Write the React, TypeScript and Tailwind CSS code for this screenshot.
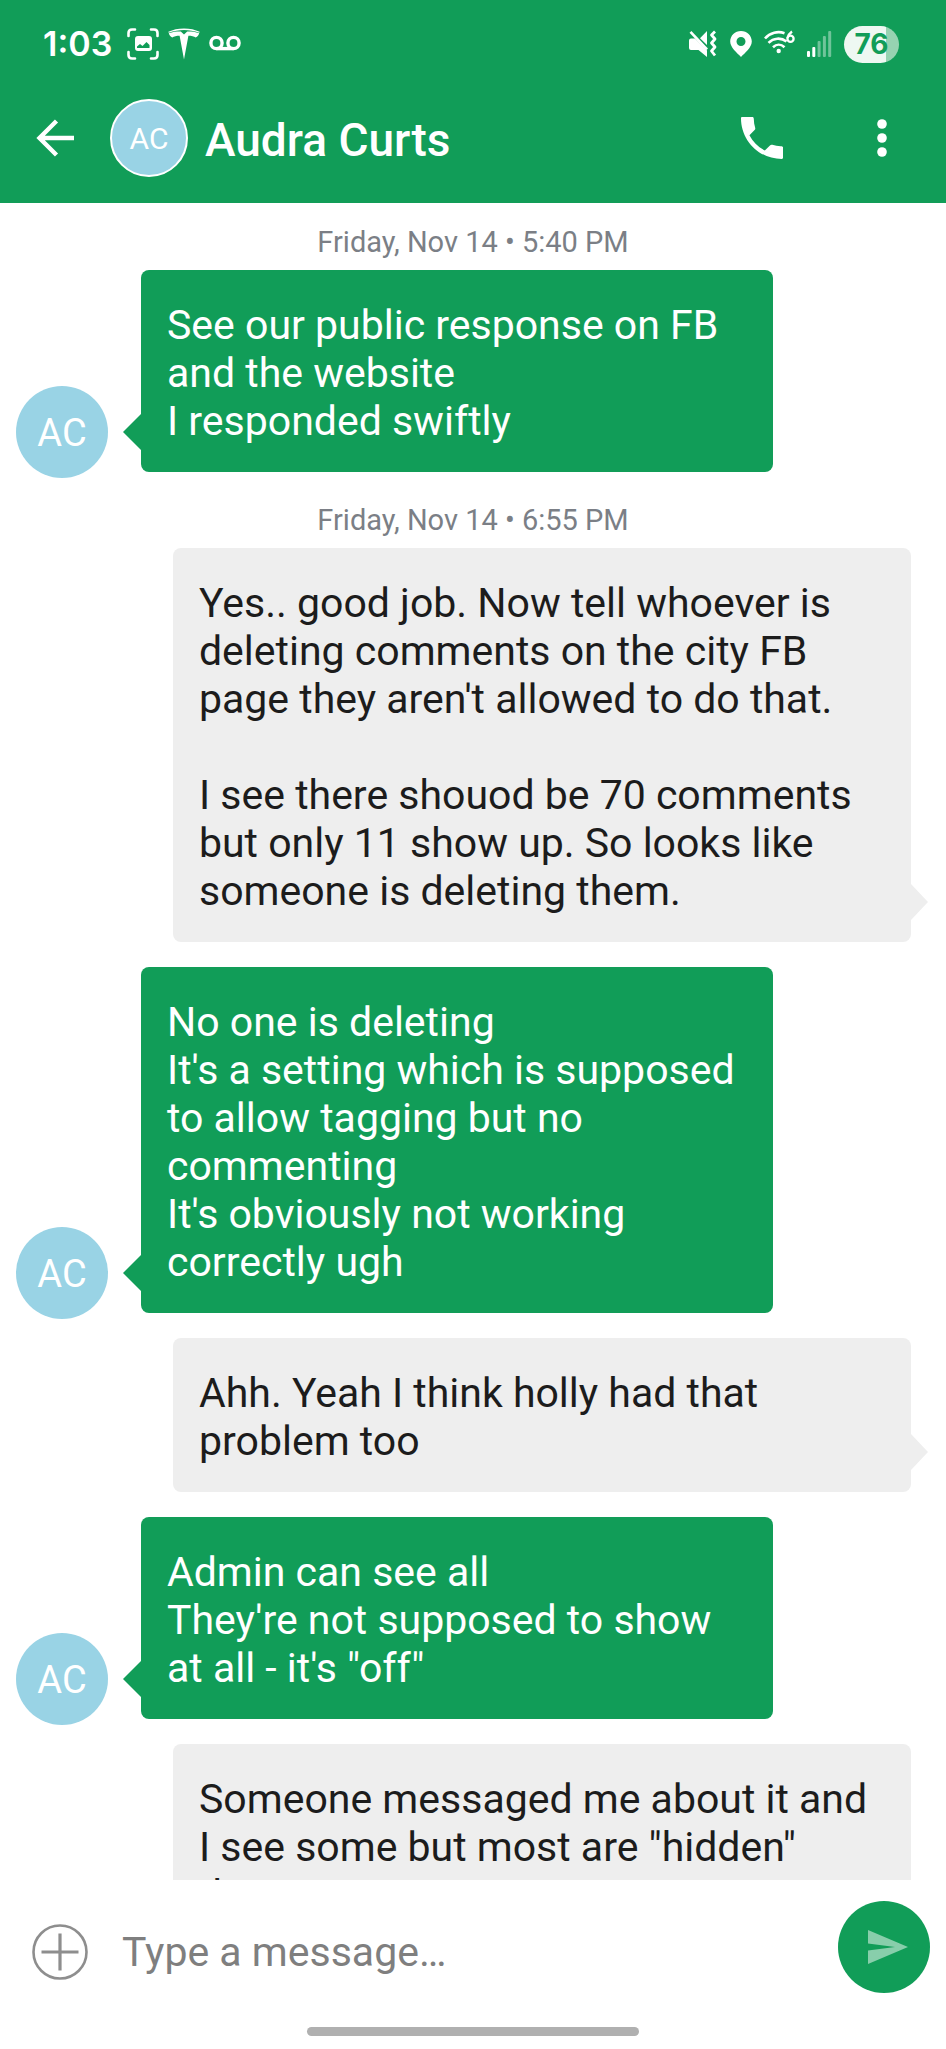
import React, { useState } from 'react';

interface Message {
  id: number;
  mine: boolean;
  text: string;
  date?: string;
}

const messages: Message[] = [
  {
    id: 1,
    mine: false,
    date: 'Friday, Nov 14 • 5:40 PM',
    text: 'See our public response on FB and the website\nI responded swiftly'
  },
  {
    id: 2,
    mine: true,
    date: 'Friday, Nov 14 • 6:55 PM',
    text: "Yes.. good job. Now tell whoever is deleting comments on the city FB page they aren't allowed to do that.\n\nI see there shouod be 70 comments but only 11 show up. So looks like someone is deleting them."
  },
  {
    id: 3,
    mine: false,
    text: "No one is deleting\nIt's a setting which is supposed to allow tagging but no commenting\nIt's obviously not working correctly ugh"
  },
  { id: 4, mine: true, text: 'Ahh. Yeah I think holly had that problem too' },
  {
    id: 5,
    mine: false,
    text: 'Admin can see all\nThey\'re not supposed to show at all - it\'s "off"'
  },
  {
    id: 6,
    mine: true,
    text: 'Someone messaged me about it and I see some but most are "hidden"\nthen'
  }
];

const StatusBar: React.FC = () => (
  <div className="flex h-[88px] items-center justify-between pl-[43px] pr-[47px]">
    <div className="flex items-center gap-[9px]">
      <span className="mr-[6px] font-[Inter,sans-serif] text-[34px] leading-[40px] font-semibold">1:03</span>
      {/* Screen capture */}
      <svg width="32" height="32" viewBox="0 0 32 32" fill="none" stroke="currentColor" strokeWidth="2.6" strokeLinecap="round">
        <path d="M1.5 8V5Q1.5 1.5 5 1.5H8M24 1.5h3q3.500 0 3.500 3.500v3M30.500 24v3q0 3.500-3.500 3.500h-3M8 30.500H5Q1.500 30.500 1.500 27v-3" />
        <path fillRule="evenodd" stroke="none" fill="currentColor" d="M11 8h11a3 3 0 0 1 3 3v9a3 3 0 0 1-3 3H11a3 3 0 0 1-3-3v-9a3 3 0 0 1 3-3zM10 20h12.500v-3l-3-3-4 4-2.500-2-3 2.500z" />
      </svg>
      {/* Tesla */}
      <svg width="32" height="32" viewBox="0 0 32 32" fill="currentColor">
        <path d="M16 31.500 11.600 7.800C8.500 7.800 6 8.300 4.300 9.400 2.500 8.600 1.200 7 .8 5.200 5 3.700 9 3.400 12.800 3.500L16 6.500l3.200-3c3.800-.1 7.800.2 12 1.700-.4 1.800-1.700 3.400-3.500 4.200-1.700-1.100-4.200-1.600-7.300-1.600z" />
        <path d="M.3 3.800C5 1.600 10 .4 16 .4s11 1.200 15.700 3.400l-.4 1C26 2.700 21 1.900 16 1.900S6 2.700.7 4.800z" />
      </svg>
      {/* Voicemail */}
      <svg width="32" height="32" viewBox="0 0 32 32" fill="none" stroke="currentColor" strokeWidth="3.4">
        <circle cx="7.500" cy="15" r="5.600" />
        <circle cx="24.500" cy="15" r="5.600" />
        <path d="M7.500 20.600h17" />
      </svg>
    </div>

    <div className="flex items-center gap-3">
      {/* Muted, vibrate */}
      <svg width="29" height="28" viewBox="0 0 29 28" fill="currentColor">
        <path d="M0 10.500Q0 8.500 2 8.500H6L18 20.500V27l-8.500-7H2Q0 20 0 18zM11 8.200 18 1v14z" />
        <path d="M1.500 1.800 18 19.500" fill="none" stroke="currentColor" strokeWidth="2.600" />
        <path d="m26 1.500-3.500 3.500 3.500 4-3.500 4 3.500 4-3.500 4 3.500 4.500" fill="none" stroke="currentColor" strokeWidth="2.800" strokeLinejoin="round" />
      </svg>
      {/* Location */}
      <svg width="22" height="28" viewBox="0 0 22 28" fill="currentColor">
        <path fillRule="evenodd" d="M11 1c6 0 10.800 4.600 10.800 10.600C21.800 17.500 15 23 11 27 7 23 .2 17.500.2 11.600.2 5.600 5 1 11 1zm0 6a4.500 4.500 0 1 0 0 9 4.500 4.500 0 0 0 0-9z" />
      </svg>
      {/* Wifi 6 */}
      <svg width="31" height="28" viewBox="0 0 31 28" fill="none" stroke="currentColor" strokeWidth="2.600">
        <path d="M1 8.500C6 2.500 14 .8 20.500 3.200M4.500 12.800c5-5 12.500-5.500 18-1.300M9 17.200c3.500-3.300 8-3.300 11.500 0" />
        <circle cx="14.700" cy="21" r="2.200" fill="currentColor" stroke="none" />
        <circle cx="26.500" cy="8.800" r="3.100" strokeWidth="2.300" />
        <path d="M23.500 8Q24.500 4 28 1.500" strokeWidth="2.300" />
      </svg>
      {/* Signal */}
      <svg width="25" height="28" viewBox="0 0 25 28" fill="currentColor">
        <rect x="0" y="21" width="3" height="6" rx="1" />
        <rect x="5.300" y="17" width="3" height="10" rx="1" />
        <rect x="10.600" y="11" width="3" height="16" rx="1" opacity=".4" />
        <rect x="15.900" y="6" width="3" height="21" rx="1" opacity=".4" />
        <rect x="21.200" y="1" width="3" height="26" rx="1" opacity=".4" />
      </svg>
      {/* Battery */}
      <span className="flex h-[37px] w-[55px] items-center justify-center rounded-full bg-linear-to-r from-[#eef8f2] from-76% to-[#96d3b1] to-76% font-[Inter,sans-serif] text-[28px] leading-[37px] font-bold text-[#119d58]">
        76
      </span>
    </div>
  </div>
);

const Header: React.FC = () => (
  <header className="h-[203px] shrink-0 bg-[#119d58] text-white">
    <StatusBar />
    <div className="flex h-[100px] items-center pl-[36px] pr-12">
      <button type="button" aria-label="Back">
        <svg width="38" height="38" viewBox="0 0 38 38" fill="none" stroke="currentColor" strokeWidth="4.400">
          <path d="M38 19H4M20.500 2 3.500 19l17 17" />
        </svg>
      </button>
      <div className="ml-[36px] flex size-[78px] items-center justify-center rounded-full border-2 border-white bg-[#99d3e5] text-[30px]">
        AC
      </div>
      <h1 className="ml-[17px] flex-1 pt-1 text-[46px] leading-[54px] font-medium">Audra Curts</h1>
      <button type="button" aria-label="Call">
        <svg width="42" height="42" viewBox="3 3 18 18" fill="currentColor">
          <path d="M6.620 10.790c1.440 2.830 3.760 5.140 6.590 6.590l2.200-2.200c.27-.27.67-.36 1.020-.24 1.120.37 2.330.57 3.570.57.55 0 1 .15 1 .5V20.500c0 .3-.2.500-.5.500C10.840 21 3 13.160 3 3.500 3 3.200 3.200 3 3.500 3H8c.35 0 .5.45.5 1 0 1.250.2 2.450.57 3.570.11.35.03.74-.25 1.020z" />
        </svg>
      </button>
      <button type="button" aria-label="More options" className="ml-[83px]">
        <svg width="32" height="38" viewBox="0 0 32 38" fill="currentColor">
          <circle cx="16" cy="5" r="4.800" />
          <circle cx="16" cy="19" r="4.800" />
          <circle cx="16" cy="33" r="4.800" />
        </svg>
      </button>
    </div>
  </header>
);

const Bubble: React.FC<{ message: Message }> = ({ message }) => {
  if (message.mine) {
    return (
      <div className="relative mr-[35px] ml-[173px] rounded-lg bg-[#eeeeee] px-[26px] pt-[31px] pb-[27px] text-[41px] leading-[48px] whitespace-pre-line text-[#1c1c1c]">
        {message.text}
        <svg className="absolute bottom-[22px] left-full" width="17" height="36" viewBox="0 0 17 36" fill="#eeeeee">
          <path d="M0 0 17 18 0 36z" />
        </svg>
      </div>
    );
  }

  return (
    <div className="mr-[173px] flex items-end gap-[33px] pl-4">
      <div className="-mb-[6px] flex size-[92px] shrink-0 items-center justify-center rounded-full bg-[#99d3e5] pt-[2px] text-[38px] text-white">
        AC
      </div>
      <div className="relative flex-1 rounded-lg bg-[#119d58] px-[26px] pt-[31px] pb-[27px] text-[41px] leading-[48px] whitespace-pre-line text-white">
        {message.text}
        <svg className="absolute right-full bottom-[22px]" width="18" height="36" viewBox="0 0 18 36" fill="#119d58">
          <path d="M18 0 0 18l18 18z" />
        </svg>
      </div>
    </div>
  );
};

const Composer: React.FC = () => {
  const [draft, setDraft] = useState('');

  return (
    <footer className="shrink-0 bg-white pt-[21px] pb-[13px]">
      <form onSubmit={(e) => e.preventDefault()} className="flex pr-4 pl-8">
        <div className="flex flex-1 items-center pt-[10px]">
          <button type="button" aria-label="Add attachment">
            <svg width="56" height="56" viewBox="0 0 56 56" fill="none" stroke="#8e8e8e" strokeWidth="2.600">
              <circle cx="28" cy="28" r="26.500" />
              <path d="M9.500 28h37M28 9.500v37" strokeWidth="3.200" />
            </svg>
          </button>
          <input
            type="text"
            aria-label="Message"
            value={draft}
            onChange={(e) => setDraft(e.target.value)}
            placeholder="Type a message…"
            className="ml-[34px] min-w-0 flex-1 text-[41px] leading-[48px] text-[#1c1c1c] outline-none placeholder:text-[#7f7f7f]"
          />
        </div>
        <button
          type="submit"
          aria-label="Send"
          className="flex size-[92px] items-center justify-center rounded-full bg-[#119d58] pl-[8px]"
        >
          <svg width="40" height="34" viewBox="0 0 40 34" fill="#88ceab">
            <path d="M0 0 40 17 0 34V20.500L27 17 0 13.500z" />
          </svg>
        </button>
      </form>
      <div className="mx-auto mt-[34px] h-[9px] w-[35%] rounded-full bg-[#b0b0b0]" />
    </footer>
  );
};

const App: React.FC = () => {
  return (
    <div className="flex h-screen flex-col bg-white font-[Roboto,sans-serif]">
      <Header />
      <main className="flex min-h-0 flex-1 flex-col gap-[25px] overflow-hidden pt-4">
        {messages.map((message) => (
          <div key={message.id} className="shrink-0">
            {message.date && (
              <p className="pt-[3px] pb-[7px] text-center text-[29px] leading-[41px] text-[#7b7f86]">{message.date}</p>
            )}
            <Bubble message={message} />
          </div>
        ))}
      </main>
      <Composer />
    </div>
  );
};

export default App;
